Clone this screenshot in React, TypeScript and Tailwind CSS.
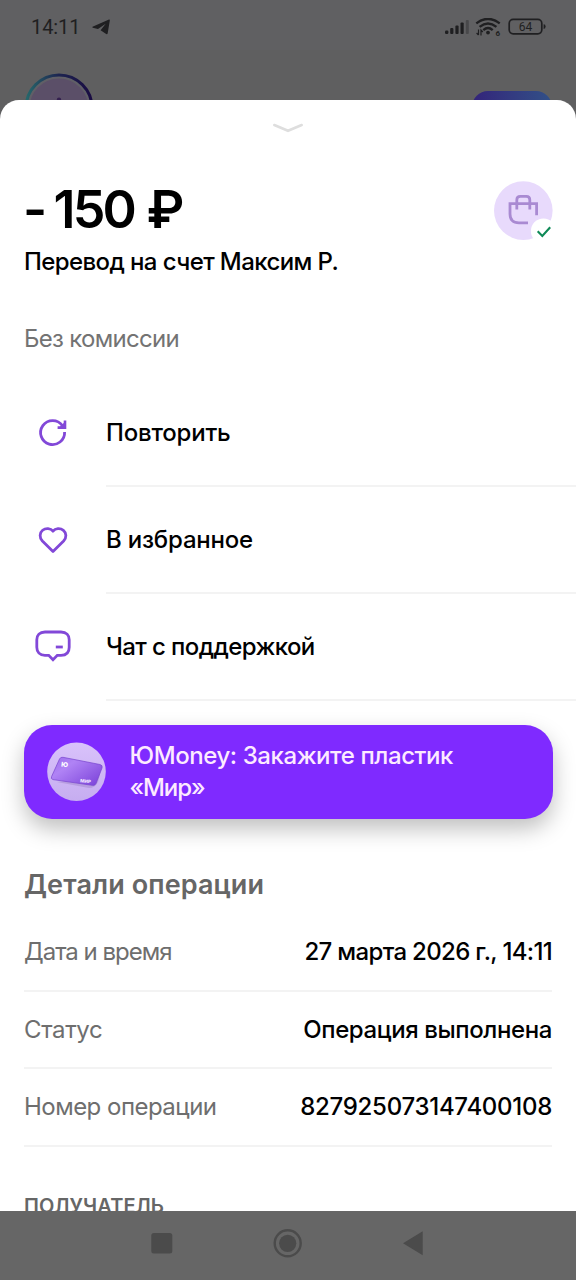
import React from 'react';

interface Action {
  id: string;
  label: string;
  icon: React.ReactNode;
  tracking: string;
}

interface Detail {
  label: string;
  value: string;
  labelTracking: string;
  valueTracking: string;
}

const ACTIONS: Action[] = [
  {
    id: 'repeat',
    label: 'Повторить',
    tracking: 'tracking-[-0.2px]',
    icon: (
      <svg className="w-9 h-9" viewBox="0 0 36 36" fill="none" stroke="#8248d8" strokeWidth="2.8">
        <path d="M29.6 17A12 12 0 1 1 27.4 10.6" />
        <path d="M30 5.6V12.6H22.6" strokeWidth="2.6" />
        <path d="M29.5 12.2L24.5 12.2L29.5 7.2Z" fill="#8248d8" stroke="none" />
      </svg>
    ),
  },
  {
    id: 'favorite',
    label: 'В избранное',
    tracking: 'tracking-[-0.2px]',
    icon: (
      <svg className="w-9 h-9" viewBox="0 0 36 36" fill="none" stroke="#8248d8" strokeWidth="2.8" strokeLinejoin="round">
        <path d="M18 29.4L7.4 19C4.2 15.6 4.5 10.9 7.6 8.3C10.8 5.7 15.6 6 18 9.2C20.4 6 25.2 5.7 28.4 8.3C31.5 10.9 31.8 15.6 28.6 19Z" />
      </svg>
    ),
  },
  {
    id: 'chat',
    label: 'Чат с поддержкой',
    tracking: 'tracking-[-0.6px]',
    icon: (
      <svg className="w-9 h-9" viewBox="0 0 36 36" fill="none" stroke="#8248d8" strokeWidth="2.8">
        <path d="M10 3H26C31.5 3 34.2 6.2 34.2 10.7V18.2C34.2 23.2 31.3 26.3 26 26.3H22.3L18 30.7L13.7 26.3H10C4.7 26.3 1.8 23.2 1.8 18.2V10.7C1.8 6.2 4.5 3 10 3Z" />
        <path d="M20.8 18H27.8" />
      </svg>
    ),
  },
];

const DETAILS: Detail[] = [
  { label: 'Дата и время', value: '27 марта 2026 г., 14:11', labelTracking: 'tracking-[-1px]', valueTracking: 'tracking-[-0.67px]' },
  { label: 'Статус', value: 'Операция выполнена', labelTracking: 'tracking-[-0.35px]', valueTracking: 'tracking-[-0.4px]' },
  { label: 'Номер операции', value: '827925073147400108', labelTracking: 'tracking-[-0.52px]', valueTracking: 'tracking-[-0.28px]' },
];

const StatusBar: React.FC = () => (
  <div className="flex h-[50px] items-center justify-between bg-[#606062] pt-1 pl-[31px] pr-[30px] text-[#1f1f21]">
    <div className="flex items-center gap-[12px]">
      <span className="font-[Roboto] text-[20px] leading-6 tracking-[-0.1px]">14:11</span>
      <svg className="h-4 w-[18px]" viewBox="0 0 18 16" fill="currentColor">
        <path d="M0.5 7.8L17 0.6Q18 0.3 17.8 1.6L15.7 14.2Q15.3 15.8 13.8 14.8L8.6 11.2L13.7 4.8L6 9.9L0.8 8.7Q0 8.3 0.5 7.8Z" />
      </svg>
    </div>
    <div className="flex items-center">
      <svg className="h-[18px] w-[101px]" viewBox="0 0 101 18">
        <g fill="currentColor">
          <rect x="0" y="12.5" width="3.4" height="3.5" rx="1.2" />
          <rect x="5.2" y="10" width="3.2" height="6" rx="1" />
          <rect x="10.4" y="7.5" width="3.2" height="8.5" rx="1" />
          <rect x="15.5" y="4.6" width="3.2" height="11.4" rx="1" />
          <rect x="20.8" y="2" width="3" height="14" rx="1" opacity="0.35" />
          <circle cx="43" cy="14.6" r="1.9" />
        </g>
        <g fill="none" stroke="currentColor" strokeWidth="2.4">
          <path d="M31.3 5.4Q43 -3.6 54.7 5.4" />
          <path d="M34.6 8.9Q43 2.2 51.4 8.9" />
          <path d="M38.3 12.2Q43 8 47.7 12.2" />
        </g>
        <path d="M33.5 11.5V17M31.6 15L33.5 17M36 17.5V12L37.8 14" fill="none" stroke="currentColor" strokeWidth="1.2" />
        <text x="50.4" y="17.5" fontSize="8" fontWeight="700" fontFamily="Roboto" fill="currentColor">6</text>
        <rect x="64.2" y="1.4" width="32.6" height="14.4" rx="4" fill="none" stroke="currentColor" strokeWidth="1.7" />
        <path d="M98.6 6.2Q100.6 6.2 100.6 8.6Q100.6 11 98.6 11Z" fill="currentColor" />
        <text x="80.4" y="13" fontSize="12" fontFamily="Roboto" textAnchor="middle" fill="currentColor">64</text>
      </svg>
    </div>
  </div>
);

// dimmed top of the main screen behind the sheet
const Backdrop: React.FC = () => (
  <div className="h-[100px] shrink-0">
    <StatusBar />
    <div className="flex h-[70px] items-start justify-between overflow-hidden pl-[24px] pr-[24px]">
      <svg className="mt-[23px] h-[70px] w-[70px]" viewBox="0 0 70 70">
        <defs>
          <linearGradient id="ring" x1="0" x2="1" y1="0" y2="0">
            <stop offset="0" stopColor="#26686b" />
            <stop offset="0.5" stopColor="#1d2450" />
            <stop offset="1" stopColor="#190b42" />
          </linearGradient>
        </defs>
        <circle cx="35" cy="35" r="33" fill="#605f66" stroke="url(#ring)" strokeWidth="3" />
        <circle cx="35" cy="35" r="29.5" fill="#5b4f68" />
        <circle cx="35" cy="26.8" r="2.2" fill="#34204f" />
      </svg>
      <div className="mt-[41px] h-8 w-20 rounded-2xl bg-linear-to-r from-[#33237a] to-[#315087]" />
    </div>
  </div>
);

const PurchaseBadge: React.FC = () => (
  <svg className="h-[60px] w-[60px]" viewBox="0 0 60 60" fill="none">
    <circle cx="29.3" cy="29.6" r="29.3" fill="#e8dafc" />
    <g stroke="#a98ad2" strokeWidth="2.8">
      <path d="M34 41.8H25Q16 41.8 16 33V22.6H42.6V34.3" />
      <path d="M22.8 28.5V19Q22.8 15.4 26.3 15.4H32.3Q35.8 15.4 35.8 19V28.5" />
    </g>
    <circle cx="49.5" cy="50" r="12.6" fill="white" />
    <path d="M43.7 50.3L48.3 55L56.2 46.2" stroke="#0f8a57" strokeWidth="2.1" />
  </svg>
);

const PromoCard: React.FC = () => (
  <svg className="h-[60px] w-[60px] shrink-0" viewBox="0 0 60 60">
    <defs>
      <linearGradient id="promoBg" x1="0" x2="0" y1="0" y2="1">
        <stop offset="0" stopColor="#d9c2fb" />
        <stop offset="1" stopColor="#c6adf0" />
      </linearGradient>
      <linearGradient id="plastic" x1="0" x2="1" y1="0" y2="0.8">
        <stop offset="0" stopColor="#9b6cec" />
        <stop offset="0.35" stopColor="#b083f5" />
        <stop offset="1" stopColor="#8048dc" />
      </linearGradient>
    </defs>
    <circle cx="29.5" cy="29.7" r="29.3" fill="url(#promoBg)" />
    <path d="M10 40L42 46Q48 46 51 40L53 32L28 38Z" fill="#a68ad0" opacity="0.55" />
    <path d="M16 15.3L53 22.5Q56 23.3 55 26L49 41.5Q48 44 45 43.3L6 37.6Q3.5 37 4.6 34.5L12.5 17Q13.5 14.8 16 15.3Z" fill="url(#plastic)" stroke="#7845cf" strokeWidth="0.7" />
    <text x="14" y="24.5" fontSize="6.5" fontWeight="800" fontFamily="Inter" fill="white" transform="rotate(6 14 24)">Ю</text>
    <text x="33" y="40.2" fontSize="4.6" fontWeight="800" fontFamily="Inter" fill="#f1e6ff" transform="rotate(6 33 40)">МИР</text>
  </svg>
);

const NavBar: React.FC = () => (
  <div className="flex h-[69px] shrink-0 items-start justify-center bg-[#666666] pt-[17px]">
    <svg className="h-[30px] w-[274px]" viewBox="0 0 274 30" fill="#4b4b4b">
      <rect x="0.3" y="5" width="21" height="20.5" rx="2.5" />
      <circle cx="136.7" cy="15.3" r="13" fill="none" stroke="#4b4b4b" strokeWidth="2.4" />
      <circle cx="136.7" cy="15.3" r="8.6" />
      <path d="M252 15.3L271.7 3.3V27.3Z" />
    </svg>
  </div>
);

const App: React.FC = () => {
  return (
    <div className="flex h-[1280px] w-[576px] flex-col overflow-hidden bg-[#5f5f60] font-[Inter,'Noto_Sans',sans-serif] text-black">
      <Backdrop />

      <main className="flex min-h-0 flex-1 flex-col overflow-hidden rounded-t-[19px] bg-white">
        <div className="flex justify-center pt-[23px]">
          <svg className="h-[10px] w-8" viewBox="0 0 32 10" fill="none" stroke="#dedede" strokeWidth="2.6" strokeLinecap="round">
            <path d="M2.3 2L16 7.8L29.7 2" />
          </svg>
        </div>

        <div className="flex items-start justify-between pt-12 pl-6 pr-[22px]">
          <div>
            <h1 className="-ml-px h-[57px] whitespace-nowrap text-[52px] font-semibold leading-[57px] tracking-[-2.1px] [word-spacing:-2.6px]">
              - <span className="tracking-[-2.8px]">150</span> <span className="ml-[4px]">₽</span>
            </h1>
            <p className="mt-2 whitespace-nowrap text-[24px] font-[450] leading-8 tracking-[-0.6px]">Перевод на счет Максим Р.</p>
          </div>
          <PurchaseBadge />
        </div>

        <p className="mt-[45px] pl-6 text-[24px] leading-8 tracking-[-0.7px] text-[#737373]">Без комиссии</p>

        <ul className="mt-[25px]">
          {ACTIONS.map((action) => (
            <li key={action.id} className="flex h-[107.1px]">
              <div className="flex w-[106px] items-center pb-[2px] pl-[35px]">{action.icon}</div>
              <button className={`flex flex-1 items-center whitespace-nowrap border-b-2 border-[#f3f3f3] text-[24px] font-[450] ${action.tracking}`}>
                {action.label}
              </button>
            </li>
          ))}
        </ul>

        <div className="mx-[23.5px] mt-[23.5px] flex h-[94px] shrink-0 items-center rounded-[28px] bg-[#7f2aff] pl-[23px] shadow-[0_10px_22px_rgba(0,0,0,0.25)]">
          <PromoCard />
          <p className="ml-[23px] whitespace-nowrap text-[24px] font-[450] leading-8 tracking-[-0.42px] text-[#fdeaff]">
            ЮMoney: Закажите пластик
            <br />
            <span className="tracking-[-1.1px]">«Мир»</span>
          </p>
        </div>

        <section className="px-6 pt-[48px]">
          <h2 className="text-[27px] font-semibold leading-9 tracking-[0.1px] text-[#666666]">Детали операции</h2>
          <dl className="mt-[12px]">
            {DETAILS.map((item) => (
              <div key={item.label} className="flex h-[77.3px] items-center justify-between whitespace-nowrap border-b-2 border-[#f3f3f3] text-[24px]">
                <dt className={`text-[#6e6e6e] ${item.labelTracking}`}>{item.label}</dt>
                <dd className={`font-[450] ${item.valueTracking}`}>{item.value}</dd>
              </div>
            ))}
          </dl>
          <h3 className="mt-[45px] text-[20px] font-semibold leading-7 tracking-[0.1px] text-[#666666]">ПОЛУЧАТЕЛЬ</h3>
        </section>
      </main>

      <NavBar />
    </div>
  );
};

export default App;
